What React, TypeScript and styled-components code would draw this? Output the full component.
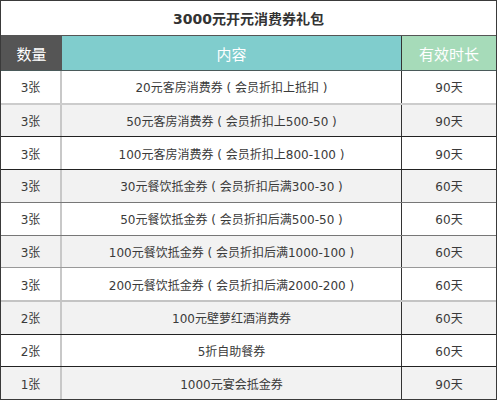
import { createGlobalStyle, styled } from "styled-components";

const GlobalStyle = createGlobalStyle`
  html, body {
    margin: 0;
    padding: 0;
    background: #ffffff;
  }
  body {
    font-family: "DejaVu Sans", "Noto Sans CJK SC", sans-serif;
    color: #333333;
  }
`;

const Table = styled.div`
  width: 497px;
  height: 400px;
  box-sizing: border-box;
  border: 1px solid #3a3a3a;
  display: flex;
  flex-direction: column;
  background: #ffffff;
`;

const Title = styled.div`
  height: 35px;
  box-sizing: border-box;
  border-bottom: 1px solid #555555;
  display: flex;
  align-items: center;
  justify-content: center;
  font-size: 14px;
  font-weight: 700;
  color: #333333;
`;

const Row = styled.div<{ $line?: string; $shade?: boolean }>`
  display: grid;
  grid-template-columns: 61px 1fr 94px;
  box-sizing: border-box;
  flex: 1;
  background: ${(p) => (p.$shade ? "#f2f2f2" : "#ffffff")};
  border-bottom: ${(p) => p.$line || "none"};
`;

const HeadRow = styled.div`
  display: grid;
  grid-template-columns: 61px 1fr 94px;
  height: 35px;
  box-sizing: border-box;
  border-bottom: 1px solid #4a5a5a;
`;

const HeadCell = styled.div<{ $bg: string; $divider?: boolean }>`
  display: flex;
  align-items: center;
  justify-content: center;
  background: ${(p) => p.$bg};
  color: #ffffff;
  font-family: "Noto Sans CJK SC", sans-serif;
  font-size: 15px;
  box-sizing: border-box;
  border-right: ${(p) => (p.$divider ? "1px solid #333333" : "none")};
`;

const Cell = styled.div<{ $divider: "light" | "dark" | "none" }>`
  display: flex;
  align-items: center;
  justify-content: center;
  font-size: 12px;
  color: #3a3a3a;
  box-sizing: border-box;
  white-space: pre;
  border-right: ${(p) =>
    p.$divider === "light"
      ? "2px solid #c8c8c8"
      : p.$divider === "dark"
      ? "1px solid #333333"
      : "none"};
`;

const rows = [
  { qty: "3张", content: "20元客房消费券 ( 会员折扣上抵扣 )", days: "90天", line: "2px solid #cccccc" },
  { qty: "3张", content: "50元客房消费券 ( 会员折扣上500-50 )", days: "90天", line: "1px solid #222222" },
  { qty: "3张", content: "100元客房消费券 ( 会员折扣上800-100 )", days: "90天", line: "1px solid #222222" },
  { qty: "3张", content: "30元餐饮抵金券 ( 会员折扣后满300-30 )", days: "60天", line: "1px solid #777777" },
  { qty: "3张", content: "50元餐饮抵金券 ( 会员折扣后满500-50 )", days: "60天", line: "1px solid #777777" },
  { qty: "3张", content: "100元餐饮抵金券 ( 会员折扣后满1000-100 )", days: "60天", line: "1px solid #999999" },
  { qty: "3张", content: "200元餐饮抵金券 ( 会员折扣后满2000-200 )", days: "60天", line: "2px solid #c4c4c4" },
  { qty: "2张", content: "100元壁萝红酒消费券", days: "60天", line: "1px solid #222222" },
  { qty: "2张", content: "5折自助餐券", days: "60天", line: "1px solid #222222" },
  { qty: "1张", content: "1000元宴会抵金券", days: "90天", line: "" },
];

export default function App() {
  return (
    <>
      <GlobalStyle />
      <Table>
        <Title>3000元开元消费券礼包</Title>
        <HeadRow>
          <HeadCell $bg="#555555">数量</HeadCell>
          <HeadCell $bg="#80cdcd" $divider>
            内容
          </HeadCell>
          <HeadCell $bg="#a6dbb9">有效时长</HeadCell>
        </HeadRow>
        {rows.map((r, i) => (
          <Row key={i} $shade={i % 2 === 1} $line={r.line}>
            <Cell $divider="light">{r.qty}</Cell>
            <Cell $divider="dark">{r.content}</Cell>
            <Cell $divider="none">{r.days}</Cell>
          </Row>
        ))}
      </Table>
    </>
  );
}
